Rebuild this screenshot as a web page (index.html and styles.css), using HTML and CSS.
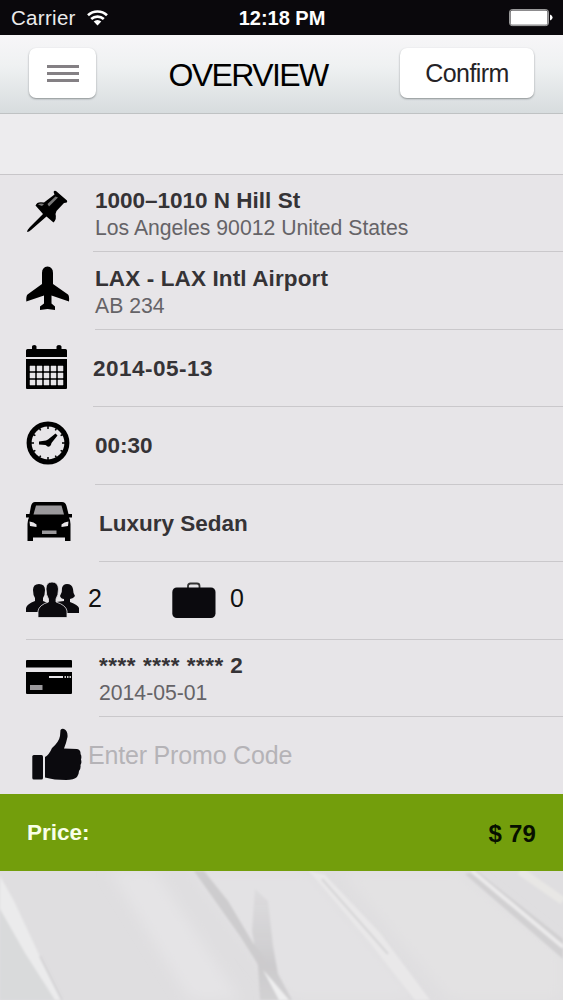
FILE: index.html
```html
<!DOCTYPE html>
<html lang="en">
<head>
<meta charset="utf-8">
<title>Overview</title>
<link rel="stylesheet" href="styles.css">
</head>
<body>
<div class="status">
  <div class="carrier"><span>Carrier</span>
    <svg width="24" height="18" viewBox="0 0 24 18" fill="none" stroke="#fff" stroke-width="2.700"><path d="M2 6.200a14 14 0 0 1 19 0M5.200 10a9.300 9.300 0 0 1 12.600 0"/><path d="M7.700 12.500a5.500 5.500 0 0 1 7.600 0L11.500 16.500z" fill="#fff" stroke="none"/></svg>
  </div>
  <div class="time">12:18 PM</div>
  <svg class="battery" width="44" height="18" viewBox="0 0 44 18"><rect x=".6" y=".6" width="38.800" height="16" rx="2.500" fill="none" stroke="#aaa" stroke-width="1"/><rect x="1.500" y="1.500" width="37" height="14.200" rx="1.500" fill="#fff"/><path d="M41 5.500q2.600 1 2.600 3t-2.600 3z" fill="#fff"/></svg>
</div>
<header class="nav">
  <button class="btn menu"><i></i><i></i><i></i></button>
  <h1>OVERVIEW</h1>
  <button class="btn confirm">Confirm</button>
</header>
<div class="spacer"></div>
<main class="list">
  <section class="row r-pin">
    <div class="icon"><svg width="44" height="44" viewBox="0 0 44 44"><path d="M1 42Q1.500 39.500 4 37L17 24 9.500 15.500Q11 11 18 12.500L28.500 4.500 27.600 2Q28 .3 30 1L41 10.500Q42 13 38 13L30.500 21 29.500 24Q31 29 27.500 32.500L20.500 26.500 5 40Q3 42 1 42z"/><path d="M21.500 14l8-7.500 2.500 1-9 9zM12 14.500q2-1.500 6-.5l-2 2z" fill="#777"/></svg></div>
    <div class="body"><strong>1000–1010 N Hill St</strong><span>Los Angeles 90012 United States</span></div>
  </section>
  <section class="row r-plane">
    <div class="icon"><svg width="44" height="45" viewBox="0 0 44 45"><path d="M16 7Q16 1 21.500.5 27 1 27 7V18L42 28.500Q43.500 30 43 35.500L25.500 29.500V37.500L29 40.500V44L21.500 43 14 44V40.500L18 37.500V29.500L.3 35.500Q0 30 1.500 28.500L16 18z"/></svg></div>
    <div class="body"><strong>LAX - LAX Intl Airport</strong><span>AB 234</span></div>
  </section>
  <section class="row r-date">
    <div class="icon"><svg width="41" height="45" viewBox="0 0 41 45"><path d="M0 5.500Q0 4 1.500 4H6V1.500Q6 0 8.300 0T10.500 1.500V4H30.500V1.500Q30.500 0 33 0T35.500 1.500V4H39.500Q41 4 41 5.500V12H0zM0 14H41V43Q41 44 40 44H1Q0 44 0 43z"/><path d="M4 21h5v5H4zm7 0h5v5h-5zm7 0h5v5h-5zm7 0h5v5h-5zm7 0h5v5h-5zM4 28h5v5H4zm7 0h5v5h-5zm7 0h5v5h-5zm7 0h5v5h-5zm7 0h5v5h-5zM4 35h5v5H4zm7 0h5v5h-5zm7 0h5v5h-5zm7 0h5v5h-5zm7 0h5v5h-5z" fill="#e7e5e8" stroke="#e7e5e8" stroke-width=".5"/></svg></div>
    <div class="body"><strong>2014-05-13</strong></div>
  </section>
  <section class="row r-time">
    <div class="icon"><svg width="44" height="44" viewBox="-22 -22 44 44"><circle r="18.900" fill="none" stroke="#000" stroke-width="5"/><path d="M0-17v3M0 17v-3M-17 0h3M17 0h-3M8.500-14.700l-1.200 2.100M14.700-8.500l-2.100 1.200M14.700 8.500l-2.100-1.200M8.500 14.700l-1.200-2.100M-8.500 14.700l1.200-2.100M-14.700 8.500l2.100-1.200M-14.700-8.500l2.100 1.200M-8.500-14.700l1.200 2.100" stroke="#000" stroke-width="1.500"/><path d="M-9-1.500L-2-2.500 0-3.500 7.500-9.500 9.500-7.500 3.500 0Q3 3.700 0 3.700L-2.500 2-9 1.500z"/></svg></div>
    <div class="body"><strong>00:30</strong></div>
  </section>
  <section class="row r-car">
    <div class="icon"><svg width="46" height="40" viewBox="0 0 46 40"><path d="M5 4Q6 0 9 0H36Q39.500 0 40.500 4L42.500 12H46V15.500H43Q44.500 18 44.500 22V39H39V35.500H7V39H1.500V22Q1.500 18 3 15.500H0V12H3.500z"/><path d="M10 3.500H35.500L38 12.500H7.500z" fill="#9b999c"/><path d="M16 28.500H30.500V32H16z" fill="#9b999c"/><path d="M3.500 19.500Q8 20 10.500 22.500V25L4 24zM42.500 19.500Q38 20 35.500 22.500V25L42 24z" fill="#e7e5e8"/></svg></div>
    <div class="body"><strong>Luxury Sedan</strong></div>
  </section>
  <section class="row counts">
    <div class="count people"><svg width="54" height="36" viewBox="0 0 54 36" fill="#0b0a0e"><path d="M0 30V26Q1 22 9 19V16Q7 13 7 8 7 2 13 2T19 8Q19 13 17 16V19L24 22V30z"/><path d="M34 14Q36.500 10 36 6 37 2 41 2 46 2 47 7 47 11 49 14 47 17 44 17V20Q52 23 53 26V31H30V20L38 19V17Q35 17 34 14z"/><path d="M12 35.500V29Q13 23 22.500 20V17Q20 13 20 7 20 0 26 0T32.500 7Q32.500 13 30 17V20Q40 23 41 29V35.500z" stroke="#e7e5e8" stroke-width=".8"/></svg><span>2</span></div>
    <div class="count bags"><svg width="44" height="37" viewBox="0 0 44 37"><path d="M16 7V4Q16 1.500 18.500 1.500H25Q27.500 1.500 27.500 4V7" fill="none" stroke="#333" stroke-width="1.800"/><rect x=".3" y="5.500" width="43.200" height="30.500" rx="4.500" fill="#0b0a0e"/></svg><span>0</span></div>
  </section>
  <section class="row r-card">
    <div class="icon"><svg width="46" height="34" viewBox="0 0 46 34"><path d="M0 1Q0 0 1 0H45Q46 0 46 1V7.500H0zM0 12H46V33Q46 34 45 34H1Q0 34 0 33z"/><path d="M4 25H16.500V30H4z" fill="#9b999c"/><path d="M23 17H37" stroke="#e7e5e8" stroke-width="2"/><path d="M38.500 17H45" stroke="#ccc" stroke-width="2" stroke-dasharray="1.500 1"/></svg></div>
    <div class="body"><strong><span class="mask">**** **** ****</span> <span class="last">2</span></strong><span>2014-05-01</span></div>
  </section>
  <section class="row r-promo">
    <div class="icon"><svg width="50" height="53" viewBox="0 0 50 53" fill="#0b0a0e"><rect x=".3" y="27" width="10.700" height="24.500" rx="1.500"/><path d="M13 29Q17 27 20 20 27 14 28 8L28.500 2Q30 0 32 1 36 3 35.500 9 34 16 32 20.500L45 21Q49 22 48.500 26 50 28 49 31.500 50 35 48.500 37 49 41 47 43 47 46 45 49 42 52 34 52 22 52 13 49.500z"/></svg></div>
    <input type="text" placeholder="Enter Promo Code">
  </section>
</main>
<div class="price"><span>Price:</span><b>$ 79</b></div>
<div class="marble">
<svg width="563" height="129" viewBox="0 0 563 129" preserveAspectRatio="none">
  <defs><filter id="soft" x="-20%" y="-20%" width="140%" height="140%"><feGaussianBlur stdDeviation="1.200"/></filter><filter id="wide" x="-30%" y="-30%" width="160%" height="160%"><feGaussianBlur stdDeviation="7"/></filter><linearGradient id="fade" x1="0" y1="0" x2="0" y2="1"><stop offset="0" stop-color="#d2d1d3" stop-opacity=".4"/><stop offset=".7" stop-color="#cccbcd"/><stop offset="1" stop-color="#d2d1d3"/></linearGradient></defs>
  <rect width="563" height="129" fill="#dfdee0"/>
  <g filter="url(#wide)"><path d="M110 0L155 0 240 129 190 129z" fill="#e5e4e6"/><path d="M190 0H310L420 129H290z" fill="#e3e2e4"/><path d="M340 0H460L563 80V129H450z" fill="#e3e2e3"/></g>
  <g filter="url(#soft)"><path d="M0 35L55 129H0z" fill="#d9dadb"/><path d="M0 5L14 30 42 90 62 129H55L25 82 0 38z" fill="#ebebec"/><path d="M40 85L62 129" stroke="#d3d2d4" stroke-width="2"/>
  <path d="M194 0L204 0 228 30 253 72 274 98 292 129H283L262 100 240 65z" fill="#cdccce"/><path d="M255 18L268 30 273 75 278 103 292 129H260L258 95 252 60z" fill="url(#fade)"/><path d="M263 99L272 109 289 129H279z" fill="#eeeeef"/>
  <path d="M309 0L325 4 380 62 430 129H415L370 72z" fill="#e9e8e9"/><path d="M322 8L388 83" stroke="#d6d5d7" stroke-width="2"/>
  <path d="M477 0L563 68V88L510 42 465 3z" fill="#d1d0d2"/><path d="M472 0L563 76" stroke="#ebeaeb" stroke-width="4"/><path d="M520 0L563 30" stroke="#e8e7e5" stroke-width="8"/></g>
</svg>
</div>
</body>
</html>
```
FILE: styles.css
```css
* { box-sizing: border-box; }
body { margin: 0; width: 563px; height: 1000px; overflow: hidden; background: #e7e5e8; color: #353336; font-family: "Liberation Sans", Arial, sans-serif; display: flex; flex-direction: column; }
svg { display: block; flex: none; }
button, input { font-family: inherit; border: 0; padding: 0; }
.status { height: 35px; flex: none; background: #0a080c; color: #fff; display: grid; grid-template-columns: 1fr auto 1fr; align-items: center; padding: 1px 10px 0 11px; }
.carrier { display: flex; align-items: center; gap: 10px; font-size: 20.500px; letter-spacing: .3px; color: #ececec; }
.time { font-size: 20px; font-weight: bold; }
.battery { justify-self: end; }
.nav { height: 79px; flex: none; display: grid; grid-template-columns: 67px 1fr 134px; align-items: start; padding: 13px 29px 0; background: linear-gradient(#f7f6f8, #eff1f2 40%, #d7dcde); border-bottom: 1px solid #bfc2c3; }
.btn { height: 50px; background: #fff; border-radius: 7px; box-shadow: 0 1px 2px #8c9193; }
.menu { display: flex; flex-direction: column; align-items: center; justify-content: center; gap: 4px; }
.menu i { width: 32px; height: 3px; background: #848084; }
.nav h1 { margin: 0; text-align: center; font-size: 32px; line-height: 54px; font-weight: normal; letter-spacing: -1.600px; color: #000; }
.confirm { font-size: 25px; letter-spacing: -.6px; color: #252326; }
.spacer { height: 61px; flex: none; background: #edecee; border-bottom: 1px solid #c8c6c9; }
.list { flex: none; }
.row { height: 77.430px; display: flex; padding-left: 26px; }
.icon { width: 67px; flex: none; display: flex; align-items: center; padding-bottom: 3px; }
.body { flex: 1; display: flex; flex-direction: column; justify-content: center; border-bottom: 1px solid #cac8cb; padding-left: 2px; white-space: nowrap; }
.body strong { font-size: 22.500px; line-height: 27px; }
.body > span { font-size: 21.200px; line-height: 27px; color: #656367; }
.r-pin .body, .r-plane .body, .r-card .body, .r-car .body { padding-top: 2px; }
.r-plane .icon { width: 69px; padding-bottom: 5px; }
.r-plane .body { padding-left: 0; }
.r-plane strong { letter-spacing: .12px; }
.r-date .body { padding-left: 0; }
.r-date strong { letter-spacing: .5px; }
.r-time .icon { width: 69px; padding-bottom: 5px; }
.r-time .body { padding-left: 0; }
.r-car .icon, .r-card .icon { width: 73px; }
.r-car .body, .r-card .body { padding-left: 0; }
.mask { letter-spacing: .52px; }
.counts { margin-left: 26px; padding-left: 0; border-bottom: 1px solid #cac8cb; }
.count { display: flex; align-items: center; font-size: 25px; color: #111; }
.count span { padding-bottom: 3px; }
.people { width: 145px; gap: 8px; }
.bags { gap: 14px; }
.bags svg { margin-left: 1px; }
.r-promo { padding-left: 32px; }
.r-promo .icon { width: 56px; }
.r-promo input { flex: 1; min-width: 0; background: none; font-size: 25px; letter-spacing: -.18px; outline: 0; }
.r-promo input::placeholder { color: #b5b3b7; opacity: 1; }
.price { height: 77px; flex: none; background: #739e0c; display: flex; align-items: center; justify-content: space-between; padding: 0 27px 0 27px; font-size: 22.500px; font-weight: bold; color: #f8ffe9; }
.price b { font-size: 24px; padding-top: 3px; letter-spacing: .2px; color: #071000; }
.marble { flex: 1; overflow: hidden; }
```
